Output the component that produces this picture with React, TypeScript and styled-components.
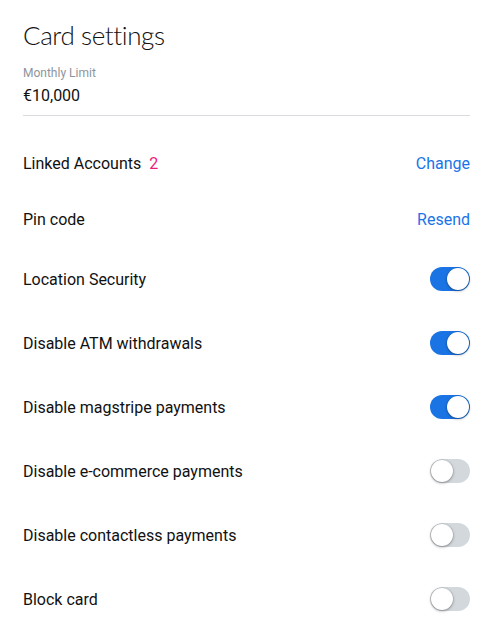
import React, { useState } from "react";
import styled, { createGlobalStyle } from "styled-components";

const GlobalStyle = createGlobalStyle`
  * { box-sizing: border-box; }
  body {
    margin: 0;
    background: #fff;
    font-family: Roboto, "Liberation Sans", sans-serif;
    color: #1c1c1e;
  }
`;

type Setting = { id: string; label: string; on: boolean };

const TOGGLES: Setting[] = [
  { id: "location", label: "Location Security", on: true },
  { id: "atm", label: "Disable ATM withdrawals", on: true },
  { id: "magstripe", label: "Disable magstripe payments", on: true },
  { id: "ecommerce", label: "Disable e-commerce payments", on: false },
  { id: "contactless", label: "Disable contactless payments", on: false },
  { id: "block", label: "Block card", on: false },
];

const App = () => {
  const [values, setValues] = useState<Record<string, boolean>>(
    Object.fromEntries(TOGGLES.map((t) => [t.id, t.on]))
  );

  const flip = (id: string) =>
    setValues((prev) => ({ ...prev, [id]: !prev[id] }));

  return (
    <Page>
      <GlobalStyle />
      <Title>Card settings</Title>
      <LimitField>
        <FieldLabel>Monthly Limit</FieldLabel>
        <FieldValue>€10,000</FieldValue>
      </LimitField>

      <SettingsList>
        <LinkRow>
          <Label>
            Linked Accounts <Count>2</Count>
          </Label>
          <Action>Change</Action>
        </LinkRow>
        <LinkRow>
          <Label>Pin code</Label>
          <Action>Resend</Action>
        </LinkRow>

        {TOGGLES.map((item) => (
          <ToggleRow key={item.id}>
            <Label>{item.label}</Label>
            <Switch $on={values[item.id]} onClick={() => flip(item.id)}>
              <Knob $on={values[item.id]} />
            </Switch>
          </ToggleRow>
        ))}
      </SettingsList>
    </Page>
  );
};

const Page = styled.main`
  width: 500px;
  padding: 18px 30px 0 23px;
  display: flex;
  flex-direction: column;
`;

const Title = styled.h1`
  margin: 0;
  font-family: Lato, "Liberation Sans", sans-serif;
  font-weight: 300;
  font-size: 26px;
  line-height: 34px;
  letter-spacing: -0.4px;
  color: #111;
`;

const LimitField = styled.div`
  margin-top: 14px;
  padding-bottom: 9px;
  border-bottom: 1px solid #d9dbde;
  display: flex;
  flex-direction: column;
`;

const FieldLabel = styled.span`
  font-size: 12px;
  line-height: 14px;
  color: #8d949c;
`;

const FieldValue = styled.span`
  margin-top: 6px;
  font-size: 16px;
  line-height: 20px;
  color: #111;
`;

const SettingsList = styled.section`
  margin-top: 19px;
  display: flex;
  flex-direction: column;
`;

const LinkRow = styled.div`
  height: 56px;
  display: flex;
  align-items: center;
  justify-content: space-between;
`;

const ToggleRow = styled.div`
  height: 64px;
  display: flex;
  align-items: center;
  justify-content: space-between;
`;

const Label = styled.span`
  font-size: 16px;
  color: #111;
`;

const Count = styled.span`
  margin-left: 4px;
  color: #f0197d;
`;

const Action = styled.button`
  border: 0;
  background: none;
  padding: 0;
  font-family: inherit;
  font-size: 16px;
  color: #1a73e8;
  cursor: pointer;
`;

const Switch = styled.button<{ $on: boolean }>`
  position: relative;
  width: 40px;
  height: 24px;
  border: 0;
  padding: 0;
  border-radius: 12px;
  background: ${({ $on }) => ($on ? "#1b74e4" : "#d3d8dd")};
  cursor: pointer;
`;

const Knob = styled.span<{ $on: boolean }>`
  position: absolute;
  top: 1px;
  left: ${({ $on }) => ($on ? "17px" : "1px")};
  width: 22px;
  height: 22px;
  border-radius: 50%;
  background: #fff;
  box-shadow: 0 1px 3px rgba(0, 0, 0, 0.35), 0 0 0 0.5px rgba(0, 0, 0, 0.12);
`;

export default App;
